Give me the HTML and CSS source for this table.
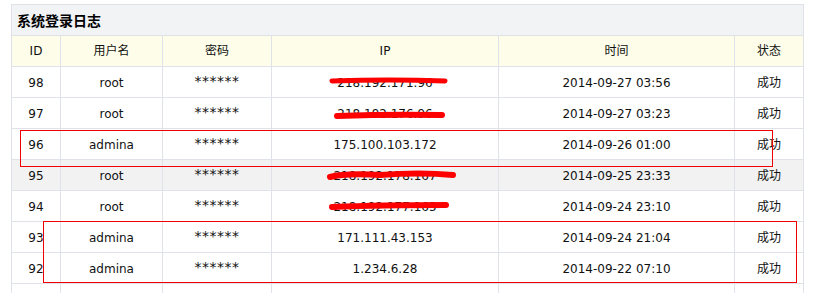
FILE: index.html
```html
<!DOCTYPE html>
<html lang="zh">
<head>
<meta charset="utf-8">
<title>系统登录日志</title>
<link rel="stylesheet" href="styles.css">
</head>
<body>
<div class="page">
  <table class="log">
    <colgroup>
      <col class="c-id"><col class="c-user"><col class="c-pwd"><col class="c-ip"><col class="c-time"><col class="c-state">
    </colgroup>
    <thead>
      <tr class="title-row"><th colspan="6">系统登录日志</th></tr>
      <tr class="head-row"><th>ID</th><th>用户名</th><th>密码</th><th>IP</th><th>时间</th><th>状态</th></tr>
    </thead>
    <tbody>
      <tr><td>98</td><td>root</td><td class="pwd">******</td><td>218.192.171.96</td><td>2014-09-27 03:56</td><td>成功</td></tr>
      <tr><td>97</td><td>root</td><td class="pwd">******</td><td>218.192.176.96</td><td>2014-09-27 03:23</td><td>成功</td></tr>
      <tr><td>96</td><td>admina</td><td class="pwd">******</td><td>175.100.103.172</td><td>2014-09-26 01:00</td><td>成功</td></tr>
      <tr class="hover"><td>95</td><td>root</td><td class="pwd">******</td><td>218.192.178.167</td><td>2014-09-25 23:33</td><td>成功</td></tr>
      <tr><td>94</td><td>root</td><td class="pwd">******</td><td>218.192.177.165</td><td>2014-09-24 23:10</td><td>成功</td></tr>
      <tr><td>93</td><td>admina</td><td class="pwd">******</td><td>171.111.43.153</td><td>2014-09-24 21:04</td><td>成功</td></tr>
      <tr><td>92</td><td>admina</td><td class="pwd">******</td><td>1.234.6.28</td><td>2014-09-22 07:10</td><td>成功</td></tr>
      <tr class="empty"><td></td><td></td><td></td><td></td><td></td><td></td></tr>
    </tbody>
  </table>
  <svg class="marks" width="815" height="293" viewBox="0 0 815 293">
    <path d="M332 81 Q390 79 445 81" stroke="#ff0000" stroke-width="5" stroke-linecap="round" fill="none"/>
    <path d="M337 116 Q390 114 442 115" stroke="#ff0000" stroke-width="6" stroke-linecap="round" fill="none"/>
    <path d="M330 177 Q345 173 380 175 Q420 172 453 175" stroke="#ff0000" stroke-width="6" stroke-linecap="round" fill="none"/>
    <path d="M332 207 Q380 205 446 205" stroke="#ff0000" stroke-width="6" stroke-linecap="round" fill="none"/>
  </svg>
  <div class="box box-a"></div>
  <div class="box box-b"></div>
</div>
</body>
</html>
```
FILE: styles.css
```css
html, body {
  margin: 0;
  padding: 0;
  background: #ffffff;
}
.page {
  position: relative;
  width: 815px;
  height: 293px;
  overflow: hidden;
  padding: 4px 12px 0 11px;
  box-sizing: border-box;
}
.log {
  width: 792px;
  table-layout: fixed;
  border-collapse: collapse;
  font-family: "DejaVu Sans", Verdana, "Noto Sans CJK SC", sans-serif;
  font-size: 12px;
  line-height: 14px;
  color: #111;
}
.c-id { width: 49px; }
.c-user { width: 102px; }
.c-pwd { width: 109px; }
.c-ip { width: 227px; }
.c-time { width: 236px; }
.c-state { width: 69px; }
.log tr {
  height: 31px;
}
.log th, .log td {
  border: 1px solid #dfe3e9;
  padding: 0;
  text-align: center;
  font-weight: normal;
  vertical-align: middle;
}
.log tbody td {
  padding-top: 2px;
}
.title-row th {
  background: #f2f3f5;
  text-align: left;
  padding-left: 5px;
  font-weight: bold;
  font-size: 14px;
  font-family: "Noto Sans CJK SC", sans-serif;
  color: #000;
}
.head-row th {
  background: #fdfde9;
  font-size: 12px;
  font-family: "DejaVu Sans", "Noto Sans CJK SC", sans-serif;
}
.log tbody td.pwd {
  font-size: 14px;
  vertical-align: top;
  padding-top: 7px;
  letter-spacing: 0.5px;
}
.hover td {
  background: #f2f2f2;
}
.marks {
  position: absolute;
  left: 0;
  top: 0;
  pointer-events: none;
}
.box {
  position: absolute;
  border: 1px solid #f00000;
  box-sizing: border-box;
  pointer-events: none;
}
.box-a {
  left: 20px;
  top: 130px;
  width: 753px;
  height: 37px;
}
.box-b {
  left: 43px;
  top: 221px;
  width: 754px;
  height: 62px;
}
```
